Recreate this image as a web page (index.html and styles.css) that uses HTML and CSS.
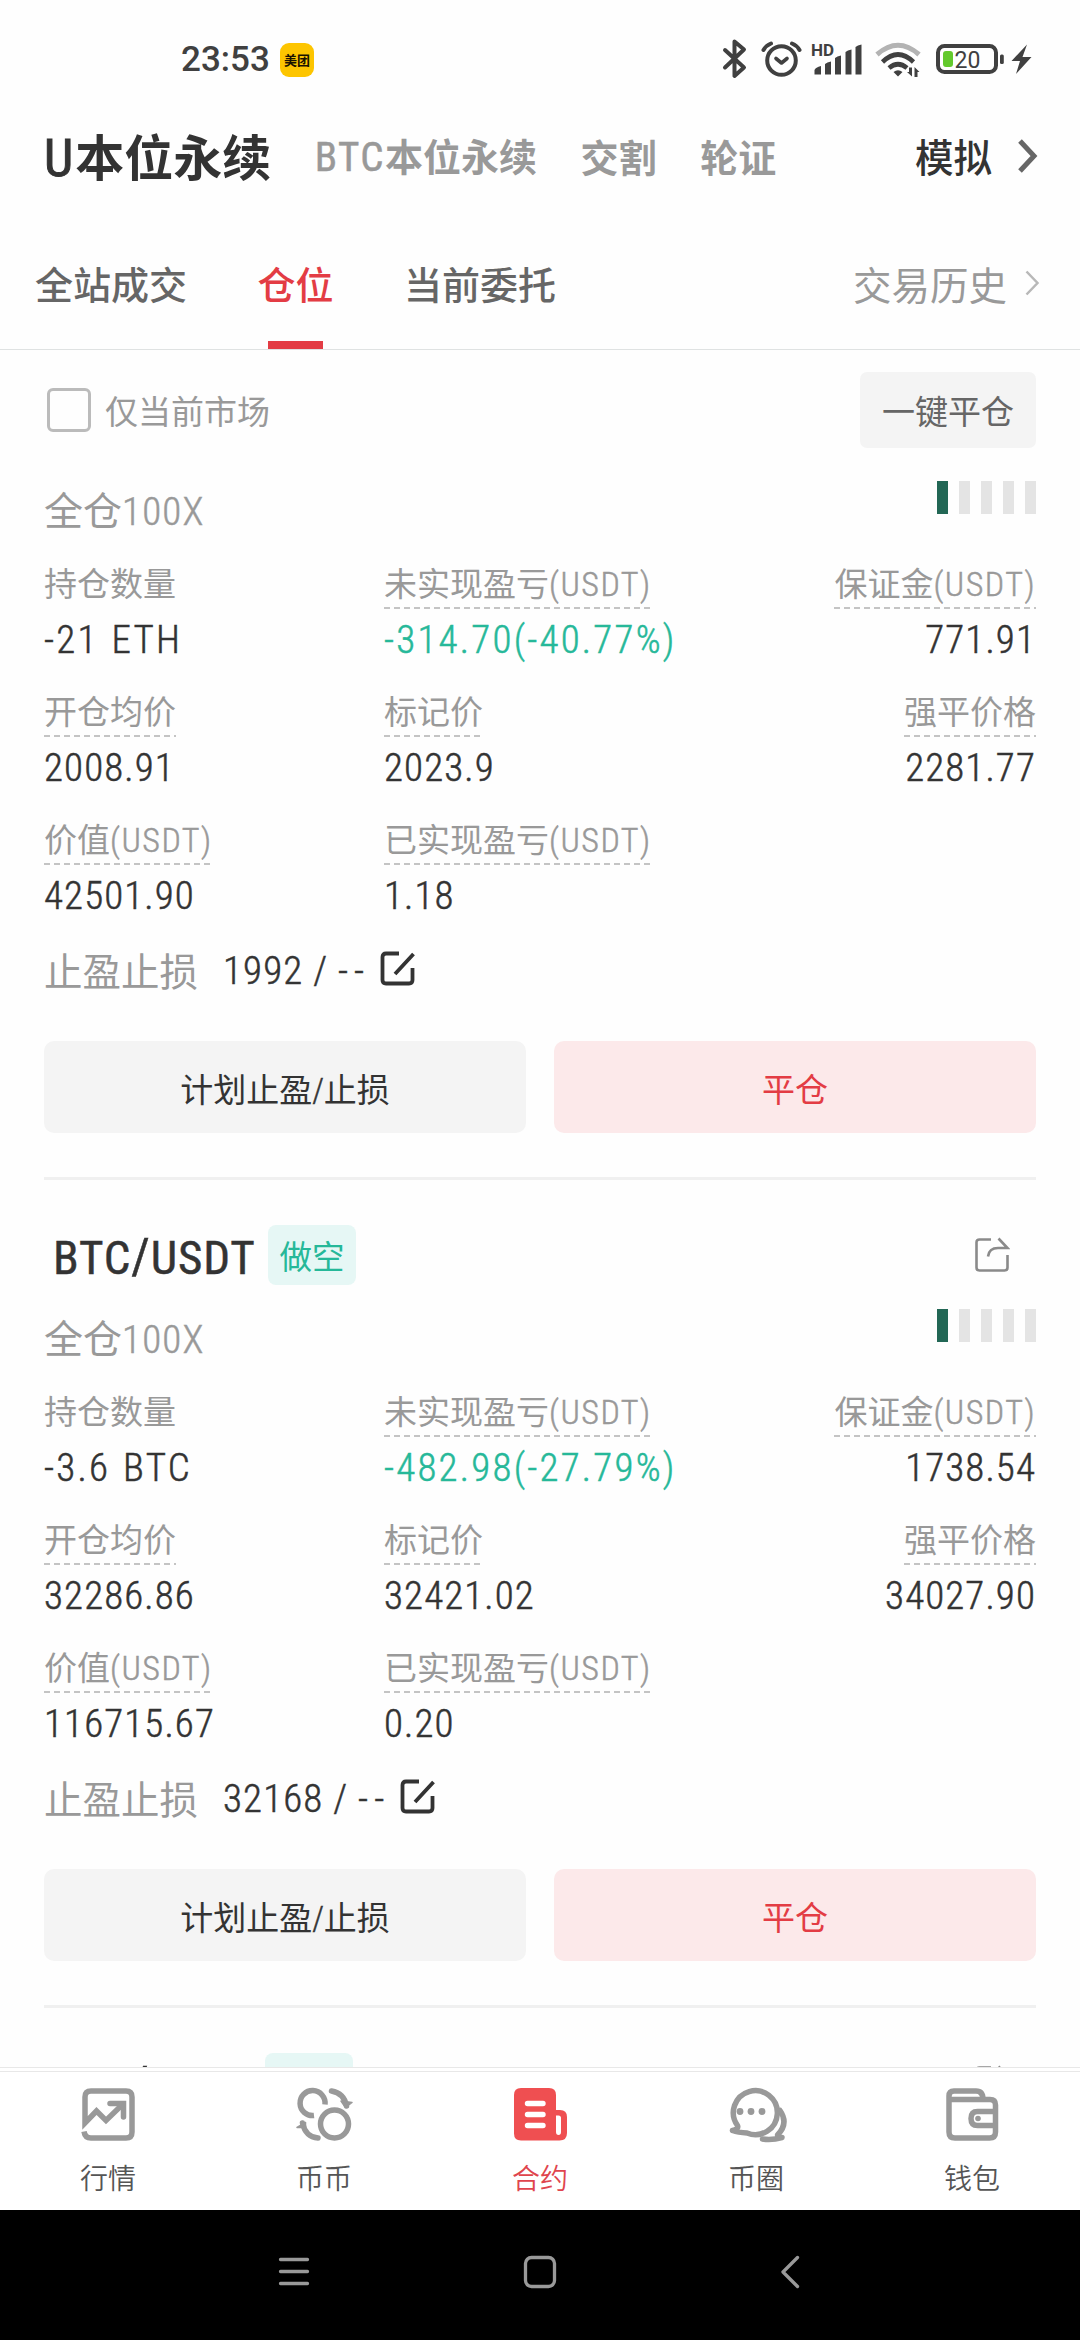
FILE: index.html
```html
<!DOCTYPE html>
<html lang="zh-CN">
<head>
<meta charset="utf-8">
<title>U本位永续</title>
<link rel="stylesheet" href="styles.css">
</head>
<body>
<header class="status">
  <span class="clock">23:53</span>
  <span class="app-badge">美团</span>
  <svg class="status-icons" width="320" height="48" viewBox="720 36 320 48" fill="none" stroke="#404040">
    <path d="M725 50l19 17.500-9.500 8.500V41.500l9.500 8-19 18" stroke-width="4" stroke-linejoin="round" stroke-linecap="round"/>
    <circle cx="781.500" cy="60.500" r="14.300" stroke-width="4"/>
    <path d="M776 58.500l5.500 4.500 5.500-4.500" stroke-width="3.600" stroke-linecap="round" stroke-linejoin="round"/>
    <path d="M763.500 50q2.500-4.500 7.500-6.500M799.500 50q-2.500-4.500-7.500-6.500" stroke-width="4" stroke-linecap="round"/>
    <text class="hd" x="811" y="55.500">HD</text>
    <path d="M814.500 74.500V70q1-2.500 6.500-4v8.500zM825 74.500V64q2-2 6-2.500v13zM835 74.500V58q2-2 6-2.500v19zM845.500 74.500V52q2-2 6-2.500v25zM855.500 74.500V47q2-2 6-2.500v30z" fill="#404040" stroke="none"/>
    <path d="M877 54.500q21-18.500 42 0" stroke="#b3b3b3" stroke-width="5"/>
    <path d="M882.500 62q15.500-15 31 0M889 68q9-7.500 18 0" stroke-width="4.600"/>
    <path d="M893.500 72q4.500-3.500 9 0l-4.500 4.500zM912 67.500v9l-5-4.500h2v-4.500zM914.500 77v-10l5 5h-2v5z" fill="#404040" stroke="none"/>
    <rect x="938" y="46" width="58" height="26" rx="6.500" stroke-width="4"/>
    <rect x="943" y="51" width="10" height="16" rx="3" fill="#63c92c" stroke="none"/>
    <text class="pct" x="954.500" y="67.500">20</text>
    <rect x="1000" y="54.500" width="3.800" height="9.500" rx="1.500" fill="#404040" stroke="none"/>
    <path d="M1027 44.500L1011.500 61h8.500l-4 13 15.500-17h-9z" fill="#404040" stroke="none"/>
  </svg>
</header>

<nav class="markets">
  <span class="market active"><span class="lat">U</span>本位永续</span>
  <span class="market btc"><span class="lat">BTC</span>本位永续</span>
  <span class="market">交割</span>
  <span class="market">轮证</span>
  <span class="demo">模拟<svg width="20" height="34" viewBox="0 0 20 34" fill="none" stroke="#666" stroke-width="5"><path d="M2 2l14 15L2 32"/></svg></span>
</nav>

<nav class="tabs">
  <span class="tab">全站成交</span>
  <span class="tab active">仓位</span>
  <span class="tab">当前委托</span>
  <span class="history">交易历史<svg width="15" height="26" viewBox="0 0 15 26" fill="none" stroke="#b8b8b8" stroke-width="2.500"><path d="M1.500 1.500L12.500 13 1.500 24.500"/></svg></span>
</nav>

<main class="positions">
  <div class="filter">
    <span class="checkbox"></span>
    <span class="filter-text">仅当前市场</span>
    <span class="close-all">一键平仓</span>
  </div>

  <section class="card first">
    <div class="level"><span>全仓<span class="lat">100X</span></span><span class="bars"><i class="on"></i><i></i><i></i><i></i><i></i></span></div>
    <div class="grid">
      <div class="cell"><span class="label plain">持仓数量</span><span class="value qty">-21 ETH</span></div>
      <div class="cell"><span class="label">未实现盈亏<span class="lat">(USDT)</span></span><span class="value pnl">-314.70(-40.77%)</span></div>
      <div class="cell end"><span class="label">保证金<span class="lat">(USDT)</span></span><span class="value">771.91</span></div>
      <div class="cell"><span class="label">开仓均价</span><span class="value">2008.91</span></div>
      <div class="cell"><span class="label">标记价</span><span class="value">2023.9</span></div>
      <div class="cell end"><span class="label">强平价格</span><span class="value">2281.77</span></div>
      <div class="cell"><span class="label">价值<span class="lat">(USDT)</span></span><span class="value">42501.90</span></div>
      <div class="cell"><span class="label">已实现盈亏<span class="lat">(USDT)</span></span><span class="value">1.18</span></div>
    </div>
    <div class="tpsl"><span class="tpsl-label">止盈止损</span><span class="tpsl-value">1992 / <span class="dash">--</span></span><svg class="edit" width="36" height="36" viewBox="0 0 36 36" fill="none" stroke="#333" stroke-width="3.800"><path d="M19 2.500H6q-3.500 0-3.500 3.500v23q0 3.500 3.500 3.500h23q3.500 0 3.500-3.500V17M33.500 3L15 23"/></svg></div>
    <div class="actions"><span class="btn">计划止盈<span class="lat">/</span>止损</span><span class="btn close">平仓</span></div>
  </section>

  <section class="card">
    <div class="title"><span class="pair">BTC<span class="slash">/</span>USDT</span><span class="side">做空</span><svg class="share" width="36" height="36" viewBox="0 0 36 36" fill="none" stroke="#8a8a8a" stroke-width="2.600"><path d="M17 2.500H5.500q-3 0-3 3v25q0 3 3 3h25q3 0 3-3V18M14 19.500q1-8.500 10-8.500h9.500L24.500 1.500"/></svg></div>
    <div class="level"><span>全仓<span class="lat">100X</span></span><span class="bars"><i class="on"></i><i></i><i></i><i></i><i></i></span></div>
    <div class="grid">
      <div class="cell"><span class="label plain">持仓数量</span><span class="value qty">-3.6 BTC</span></div>
      <div class="cell"><span class="label">未实现盈亏<span class="lat">(USDT)</span></span><span class="value pnl">-482.98(-27.79%)</span></div>
      <div class="cell end"><span class="label">保证金<span class="lat">(USDT)</span></span><span class="value">1738.54</span></div>
      <div class="cell"><span class="label">开仓均价</span><span class="value">32286.86</span></div>
      <div class="cell"><span class="label">标记价</span><span class="value">32421.02</span></div>
      <div class="cell end"><span class="label">强平价格</span><span class="value">34027.90</span></div>
      <div class="cell"><span class="label">价值<span class="lat">(USDT)</span></span><span class="value">116715.67</span></div>
      <div class="cell"><span class="label">已实现盈亏<span class="lat">(USDT)</span></span><span class="value">0.20</span></div>
    </div>
    <div class="tpsl"><span class="tpsl-label">止盈止损</span><span class="tpsl-value">32168 / <span class="dash">--</span></span><svg class="edit" width="36" height="36" viewBox="0 0 36 36" fill="none" stroke="#333" stroke-width="3.800"><path d="M19 2.500H6q-3.500 0-3.500 3.500v23q0 3.500 3.500 3.500h23q3.500 0 3.500-3.500V17M33.500 3L15 23"/></svg></div>
    <div class="actions"><span class="btn">计划止盈<span class="lat">/</span>止损</span><span class="btn close">平仓</span></div>
  </section>

  <section class="card">
    <div class="title"><span class="pair etc">ETC<span class="slash">/</span>USDT</span><span class="side">做空</span><svg class="share" width="36" height="36" viewBox="0 0 36 36" fill="none" stroke="#8a8a8a" stroke-width="2.600"><path d="M17 2.500H5.500q-3 0-3 3v25q0 3 3 3h25q3 0 3-3V18M14 19.500q1-8.500 10-8.500h9.500L24.500 1.500"/></svg></div>
  </section>
</main>

<nav class="tabbar">
  <span class="item"><svg width="60" height="60" viewBox="78 2083 60 60" fill="none" stroke="#999" stroke-width="5.500"><path d="M84 2130.500q1 6.500 7 6.500h35q6 0 6-6v-35q0-6-6-6H91q-6 0-6 6v26l11.500-12 9.500 9.500 18-17.500"/><path d="M110 2102.500h13.500v13.500" stroke-linecap="round"/></svg>行情</span>
  <span class="item"><svg width="60" height="60" viewBox="294 2083 60 60" fill="none" stroke="#999" stroke-width="5.500"><circle cx="334.500" cy="2123" r="14"/><path d="M325 2103.500A12.500 12.500 0 1 0 314 2114.500"/><path d="M331.500 2090q12.500 2 15 15M318 2137q-12.500-1-15.500-15" stroke-linecap="round"/><path d="M341 2100l11 1.500-6.500 5zM297 2126.500l8.500-5v5z" fill="#999" stroke-width="1.500" stroke-linejoin="round"/></svg>币币</span>
  <span class="item active"><svg width="60" height="60" viewBox="510 2083 60 60" fill="none"><path d="M521 2087h28q7 0 7 7v15h4q7 0 7 7v16q0 7.500-7.500 7.500H521q-7 0-7-7V2094q0-7 7-7z" fill="#ef4f51"/><path d="M527.500 2102.500h15.500M527.500 2113.500h15.500M527.500 2124.500h15.500" stroke="#fff" stroke-width="5.400" stroke-linecap="round"/><path d="M556 2114.500h2.500q2.500 0 2.500 2.500v14q0 3-2.500 3t-2.500-3z" fill="#fff"/></svg>合约</span>
  <span class="item"><svg width="66" height="60" viewBox="723 2083 66 60" fill="none" stroke="#999" stroke-width="5.500" stroke-linecap="round" stroke-linejoin="round"><path d="M732.500 2129.500Q738 2131.500 747 2132A22 22 0 1 0 737.500 2124.500Q739 2128 732.500 2129.500"/><path d="M780 2109.500q9 13-2.500 24.500 0 2.500 4.500 2.500-10 3-19.500 1.500"/><g fill="#999" stroke="none"><circle cx="740" cy="2110.500" r="3.400"/><circle cx="751" cy="2110.500" r="3.400"/><circle cx="762" cy="2110.500" r="3.400"/></g></svg>币圈</span>
  <span class="item"><svg width="60" height="60" viewBox="942 2083 60 60" fill="none" stroke="#999" stroke-width="5.500"><path d="M949 2098.500V2095q0-5 5-5h22q7 0 7 8.500M949 2098.500h41q5.500 0 5.500 5.500v27q0 6-6 6H955q-6 0-6-6zM995.500 2110.500h-18q-6.500 0-6.500 7t6.500 7h18"/><circle cx="978" cy="2117.500" r="2.800" fill="#999" stroke="none"/></svg>钱包</span>
</nav>

<footer class="sysnav">
  <svg width="1080" height="130" viewBox="0 2210 1080 130" fill="none" stroke="#999" stroke-width="3.300" stroke-linecap="round">
    <path d="M280.500 2259.500h27M280.500 2271.500h27M280.500 2283.500h27"/>
    <rect x="525.500" y="2257.500" width="29" height="29" rx="6"/>
    <path d="M797.500 2257.500L783 2272l14.500 14.500" stroke-linejoin="round"/>
  </svg>
</footer>
</body>
</html>
```
FILE: styles.css
```css
* { box-sizing: border-box; }
body {
  margin: 0;
  width: 1080px;
  height: 2340px;
  overflow: hidden;
  display: flex;
  flex-direction: column;
  background: #fefefe;
  color: #333;
  font-family: "Noto Sans CJK SC", sans-serif;
  white-space: nowrap;
}
svg { display: block; flex: none; }
.lat, .value, .pair, .tpsl-value { font-family: "Roboto Condensed", Roboto, sans-serif; font-weight: 300; -webkit-text-stroke: .5px currentColor; }

.status { height: 119px; flex: none; display: flex; align-items: center; padding-left: 181px; }
.clock { width: 99px; font: 500 35px/48px Roboto, sans-serif; color: #404040; }
.app-badge { width: 34px; height: 34px; border-radius: 9px; background: #fdc500; color: #1a1200; font-size: 13px; font-weight: 700; line-height: 33px; text-align: center; }
.status-icons { margin-left: 406px; }
.status-icons text { fill: #404040; stroke: none; font-family: Roboto, sans-serif; }
.hd { font-size: 17px; font-weight: 700; }
.pct { font-size: 23px; font-weight: 400; }

.markets { height: 80px; flex: none; display: flex; align-items: center; padding: 0 44px 7px; line-height: 73px; }
.market { font-size: 38px; font-weight: 700; color: #999; margin-right: 43.500px; }
.market .lat { font-size: 41px; font-weight: 400; letter-spacing: 1.500px; }
.market.active { font-size: 49px; color: #333; padding-top: 2px; }
.market.active .lat { font-size: 52px; letter-spacing: 2px; -webkit-text-stroke-width: 1px; }
.demo { margin-left: auto; display: flex; align-items: center; gap: 26px; font-size: 38.500px; font-weight: 500; color: #333; }
.demo svg { margin-right: -2px; }

.tabs { height: 151px; flex: none; display: flex; padding: 0 36px 0 35px; border-bottom: 1px solid #dfe2e2; font-size: 38px; line-height: 168px; }
.tab { position: relative; margin-right: 70.500px; font-weight: 500; color: #666; height: 150px; }
.tab.active { color: #e33c44; }
.tab.active::after { content: ""; position: absolute; left: 10px; bottom: 0; width: 55px; height: 8px; background: #e33c44; }
.history { display: flex; margin-left: auto; font-size: 38.500px; color: #999; height: 150px; gap: 18px; }
.history svg { margin: 71px 4px 0 0; }

.positions { height: 1717px; flex: none; overflow: hidden; padding: 22px 44px 0; }
.filter { height: 76px; display: flex; align-items: center; font-size: 33px; line-height: 76px; color: #999; }
.checkbox { width: 44px; height: 44px; border: 3px solid #bbb; border-radius: 6px; margin: 0 14px 0 3px; }
.close-all { margin-left: auto; width: 176px; border-radius: 7px; background: #f4f4f4; color: #666; text-align: center; }

.card { border-bottom: 3px solid #f0f0f0; }
.card.first { padding-top: 24px; }
.title { height: 120px; padding: 30px 26px 0 9px; display: flex; align-items: center; }
.pair { width: 215px; font-size: 47px; font-weight: 400; line-height: 60px; letter-spacing: .900px; padding-top: 6px; }
.pair.etc { width: 212px; }
.slash { font-size: 50px; line-height: 50px; }
.side { width: 88px; height: 60px; border-radius: 8px; background: #e6f7f5; color: #26b899; font-size: 32.500px; line-height: 60px; text-align: center; }
.share { margin-left: auto; }
.level { height: 84px; display: flex; justify-content: space-between; font-size: 39px; line-height: 72px; color: #999; }
.level .lat { letter-spacing: 1.200px; }
.bars { display: flex; gap: 11px; margin-top: 9px; }
.bars i { width: 11px; height: 33px; background: #e4e4e4; }
.bars i.on { background: #226755; }

.grid { display: grid; grid-template-columns: 340px 330px 1fr; grid-auto-rows: 128px; }
.cell { display: flex; flex-direction: column; align-items: flex-start; }
.cell.end { align-items: flex-end; }
.label { height: 53px; font-size: 33px; line-height: 52px; color: #999; background: repeating-linear-gradient(90deg, #c4c4c4 0 6px, transparent 6px 10px) left bottom / 100% 2px no-repeat; }
.label.plain { background: none; }
.label .lat { font-size: 34px; letter-spacing: 1.500px; }
.value { font-size: 39px; line-height: 62px; letter-spacing: 1.100px; color: #333; }
.value.qty { letter-spacing: 2.200px; word-spacing: 2px; }
.value.pnl { color: #26b899; letter-spacing: 2.200px; }
.tpsl { height: 58px; display: flex; align-items: center; line-height: 58px; font-size: 38.500px; }
.tpsl-label { color: #999; margin-right: 25px; }
.tpsl-value { font-size: 39px; letter-spacing: 1.100px; color: #333; padding-top: 4px; }
.dash { letter-spacing: 6px; }
.edit { margin-left: 10px; }
.actions { display: grid; grid-template-columns: 1fr 1fr; gap: 28px; margin: 43px 0 44px; }
.btn { height: 92px; border-radius: 10px; background: #f4f4f4; text-align: center; font-size: 33px; line-height: 94px; color: #333; }
.btn.close { background: #fce9ea; color: #e33c44; }

.tabbar { height: 143px; flex: none; display: grid; grid-template-columns: repeat(5, 1fr); background: #fff; border-top: 1px solid #e8e8e8; font-size: 28px; font-weight: 350; line-height: 40px; color: #555; }
.item { display: flex; flex-direction: column; align-items: center; margin-top: 3px; padding-top: 12px; border-top: 1px solid #e8e8e8; gap: 13px; }
.item.active { color: #e0454d; }
.sysnav { height: 130px; flex: none; background: #000; }
```
